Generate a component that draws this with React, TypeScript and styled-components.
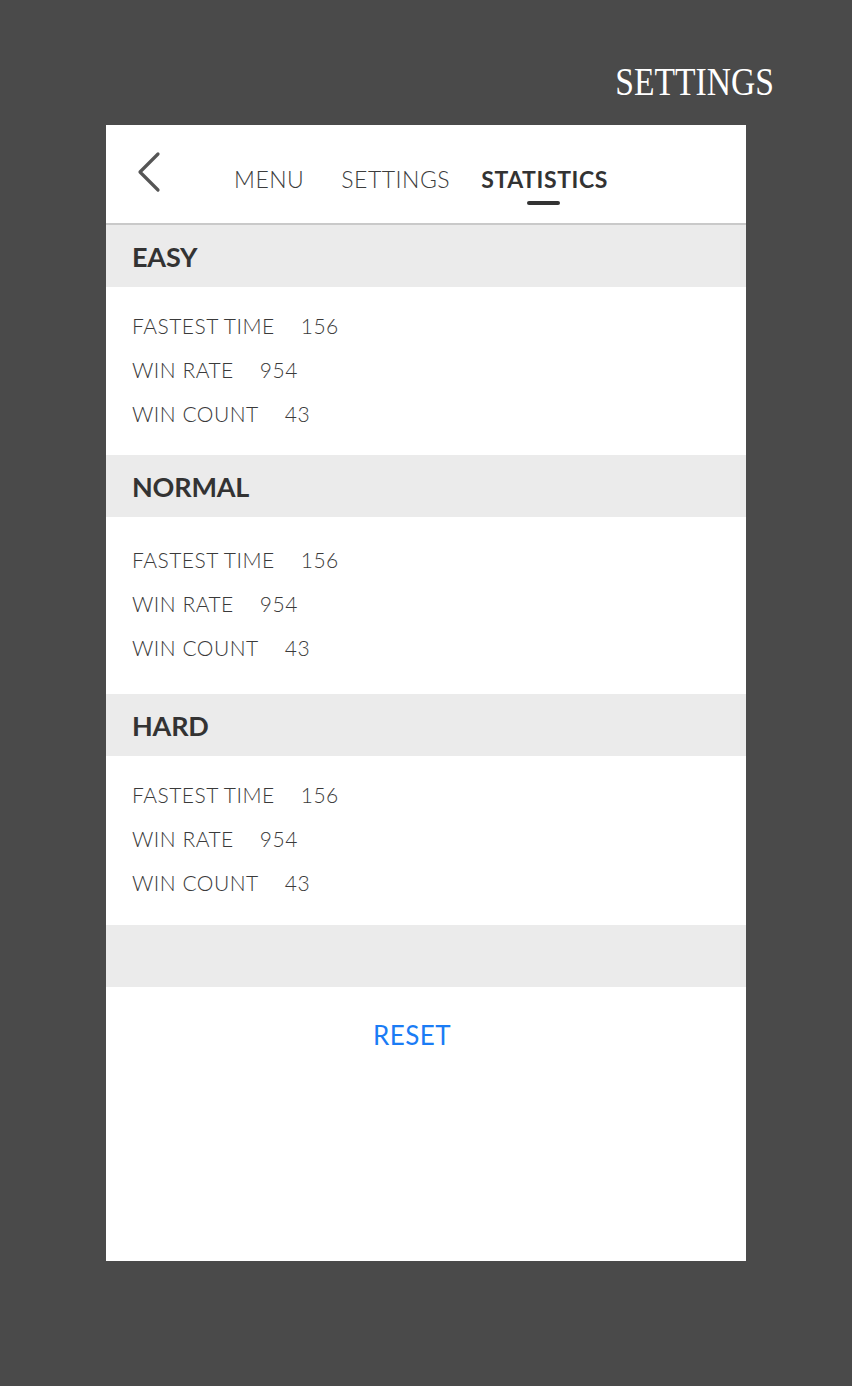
import React from "react";
import styled, { createGlobalStyle } from "styled-components";

const Global = createGlobalStyle`
  html, body { margin: 0; padding: 0; background: #4a4a4a; }
  body { font-family: Lato, "Open Sans", sans-serif; }
`;

const Page = styled.div`
  width: 852px;
  height: 1386px;
  background: #4a4a4a;
  display: flex;
  flex-direction: column;
  box-sizing: border-box;
  padding-top: 56px;
`;

const Title = styled.div`
  align-self: flex-end;
  margin-right: 78px;
  height: 69px;
  color: #ffffff;
  font-family: "Liberation Serif", serif;
  font-size: 40px;
  line-height: 52px;
  transform: scaleX(0.84);
  transform-origin: right center;
`;

const Card = styled.div`
  margin-left: 106px;
  width: 640px;
  height: 1136px;
  background: #ffffff;
  display: flex;
  flex-direction: column;
`;

const Header = styled.div`
  height: 98px;
  border-bottom: 2px solid #c9c9c9;
  display: flex;
  align-items: center;
  position: relative;
`;

const Back = styled.div`
  width: 128px;
  padding-left: 30px;
  box-sizing: border-box;
  display: flex;
  align-items: center;
  margin-top: -4px;
`;

const Tabs = styled.div`
  display: flex;
  gap: 37px;
  margin-top: 10px;
`;

const Tab = styled.div<{ $active?: boolean }>`
  position: relative;
  font-size: 23px;
  font-weight: ${(p) => (p.$active ? 700 : 300)};
  color: ${(p) => (p.$active ? "#333333" : "#3c3c3c")};
  letter-spacing: ${(p) => (p.$active ? "0.6px" : "0.5px")};
  margin-left: ${(p) => (p.$active ? "-6px" : "0")};
  &::after {
    content: "";
    display: ${(p) => (p.$active ? "block" : "none")};
    position: absolute;
    left: 50%;
    bottom: -12px;
    width: 33px;
    height: 4px;
    margin-left: -18px;
    border-radius: 2px;
    background: #333333;
  }
`;

const SectionHead = styled.div`
  height: 62px;
  background: #ebebeb;
  display: flex;
  align-items: center;
  padding-left: 26px;
  font-size: 27px;
  font-weight: 700;
  color: #333333;
  letter-spacing: -0.2px;
`;

const SectionBody = styled.div<{ $top: number; $bottom: number }>`
  padding: ${(p) => p.$top}px 0 ${(p) => p.$bottom}px 26px;
  display: flex;
  flex-direction: column;
`;

const Row = styled.div`
  height: 44px;
  display: flex;
  align-items: center;
  gap: 26px;
  font-size: 21px;
  font-weight: 300;
  color: #3a3a3a;
  letter-spacing: 0.5px;
`;

const Reset = styled.div`
  display: flex;
  justify-content: center;
  padding-top: 32px;
  padding-right: 28px;
  font-size: 26px;
  font-weight: 400;
  color: #1a7cf5;
  letter-spacing: 0.4px;
`;

type Sec = { name: string; top: number; bottom: number };
const sections: Sec[] = [
  { name: "EASY", top: 16, bottom: 20 },
  { name: "NORMAL", top: 20, bottom: 25 },
  { name: "HARD", top: 16, bottom: 21 },
];

const stats = [
  ["FASTEST TIME", "156"],
  ["WIN RATE", "954"],
  ["WIN COUNT", "43"],
];

export default function App() {
  return (
    <>
      <Global />
      <Page>
        <Title>SETTINGS</Title>
        <Card>
          <Header>
            <Back>
              <svg width="26" height="42" viewBox="0 0 26 42">
                <path d="M22 3 L4 21 L22 39" fill="none" stroke="#555" strokeWidth="3.2" strokeLinecap="round" strokeLinejoin="round" />
              </svg>
            </Back>
            <Tabs>
              <Tab>MENU</Tab>
              <Tab>SETTINGS</Tab>
              <Tab $active>STATISTICS</Tab>
            </Tabs>
          </Header>
          {sections.map((s) => (
            <React.Fragment key={s.name}>
              <SectionHead>{s.name}</SectionHead>
              <SectionBody $top={s.top} $bottom={s.bottom}>
                {stats.map(([k, v]) => (
                  <Row key={k}>
                    <span>{k}</span>
                    <span>{v}</span>
                  </Row>
                ))}
              </SectionBody>
            </React.Fragment>
          ))}
          <SectionHead />
          <Reset>RESET</Reset>
        </Card>
      </Page>
    </>
  );
}
